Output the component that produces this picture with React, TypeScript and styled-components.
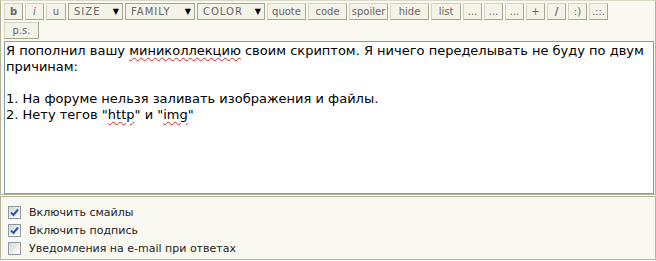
import React from 'react';
import styled, { createGlobalStyle } from 'styled-components';

const GlobalStyle = createGlobalStyle`
  html, body {
    margin: 0;
    padding: 0;
    background: #ffffff;
  }
  body {
    font-family: 'DejaVu Sans', Verdana, sans-serif;
  }
`;

type ToolButton = { label: string; width: number; bold?: boolean };

const buttons: ToolButton[] = [
  { label: 'quote', width: 39 },
  { label: 'code', width: 39 },
  { label: 'spoiler', width: 39 },
  { label: 'hide', width: 39 },
  { label: 'list', width: 30 },
  { label: '...', width: 19 },
  { label: '...', width: 19 },
  { label: '...', width: 19 },
  { label: '+', width: 19 },
  { label: '/', width: 19, bold: true },
  { label: ':)', width: 19 },
  { label: '.::.', width: 19 },
];

const options = [
  { label: 'Включить смайлы', checked: true },
  { label: 'Включить подпись', checked: true },
  { label: 'Уведомления на e-mail при ответах', checked: false },
];

const CheckBox = ({ checked }: { checked: boolean }) => (
  <Box>
    {checked && (
      <svg width="9" height="9" viewBox="0 0 9 9">
        <path d="M1 4.5 L3.5 7 L8 1.5" fill="none" stroke="#2a56b0" strokeWidth="2" />
      </svg>
    )}
  </Box>
);

const App = () => {
  return (
    <Page>
      <GlobalStyle />
      <EditorPanel>
        <Toolbar>
          <Btn w={19} weight="bold">b</Btn>
          <Btn w={19} italic>i</Btn>
          <Btn w={20}>u</Btn>
          <Select w={55}>SIZE<Arrow>▼</Arrow></Select>
          <Select w={70}>FAMILY<Arrow>▼</Arrow></Select>
          <Select w={68}>COLOR<Arrow>▼</Arrow></Select>
          {buttons.map((b, i) => (
            <Btn key={i} w={b.width} weight={b.bold ? 'bold' : 'normal'}>
              {b.label}
            </Btn>
          ))}
        </Toolbar>
        <Toolbar>
          <Btn w={35}>p.s.</Btn>
        </Toolbar>
        <TextArea>
          <Line>
            Я пополнил вашу <Misspelled>миниколлекцию</Misspelled> своим скриптом. Я ничего переделывать не буду по двум причинам:
          </Line>
          <Line>&nbsp;</Line>
          <Line>1. На форуме нельзя заливать изображения и файлы.</Line>
          <Line>
            2. Нету тегов "<Misspelled>http</Misspelled>" и "<Misspelled>img</Misspelled>"
          </Line>
        </TextArea>
      </EditorPanel>
      <OptionsPanel>
        {options.map((o) => (
          <OptionRow key={o.label}>
            <CheckBox checked={o.checked} />
            <OptionLabel>{o.label}</OptionLabel>
          </OptionRow>
        ))}
      </OptionsPanel>
    </Page>
  );
};

export default App;

const Page = styled.div`
  width: 656px;
  height: 261px;
  background: #ffffff;
`;

const EditorPanel = styled.div`
  box-sizing: border-box;
  width: 656px;
  height: 195px;
  background: #f9f9f1;
  border: 1px solid #b4b49b;
  border-top-color: #d9d9c8;
  padding: 2px 1px 0 3px;
`;

const Toolbar = styled.div`
  display: flex;
  gap: 2px;
  height: 17px;
  margin-bottom: 2px;
`;

const Btn = styled.div<{ w: number; weight?: string; italic?: boolean }>`
  box-sizing: border-box;
  width: ${({ w }) => w}px;
  height: 17px;
  display: flex;
  align-items: center;
  justify-content: center;
  border: 1px solid #a7a78e;
  border-top-color: #d2d2c0;
  border-left-color: #d2d2c0;
  background: #f3f3e8;
  color: #666;
  font-size: 10px;
  font-weight: ${({ weight }) => weight || 'normal'};
  font-style: ${({ italic }) => (italic ? 'italic' : 'normal')};
  white-space: nowrap;
  overflow: hidden;
`;

const Select = styled.div<{ w: number }>`
  box-sizing: border-box;
  width: ${({ w }) => w}px;
  height: 17px;
  display: flex;
  align-items: center;
  justify-content: space-between;
  padding: 0 3px 0 5px;
  border: 1px solid #a7a78e;
  background: #f3f3e8;
  color: #666;
  font-size: 10px;
  letter-spacing: 1px;
`;

const Arrow = styled.span`
  color: #000;
  font-size: 8px;
  letter-spacing: 0;
`;

const TextArea = styled.div`
  box-sizing: border-box;
  width: 650px;
  height: 153px;
  border: 1px solid #7f9db9;
  background: #ffffff;
  padding: 1px 0 0 1px;
  color: #000;
  font-size: 13px;
  overflow: hidden;
`;

const Line = styled.div`
  line-height: 16px;
`;

const Misspelled = styled.span`
  text-decoration: underline wavy #e02020;
  text-decoration-thickness: 1px;
  text-underline-offset: 2px;
`;

const OptionsPanel = styled.div`
  box-sizing: border-box;
  width: 656px;
  height: 64px;
  margin-top: 1px;
  background: #f9f9f1;
  border: 1px solid #b4b49b;
  padding: 9px 0 0 7px;
  display: flex;
  flex-direction: column;
  gap: 5px;
`;

const OptionRow = styled.div`
  display: flex;
  align-items: center;
  height: 13px;
`;

const Box = styled.div`
  box-sizing: border-box;
  width: 13px;
  height: 13px;
  border: 1px solid #8f9aa5;
  background: linear-gradient(135deg, #d8d8d2 0%, #f4f4f0 70%, #ffffff 100%);
  display: flex;
  align-items: center;
  justify-content: center;
`;

const OptionLabel = styled.span`
  margin-left: 8px;
  color: #222;
  font-size: 11px;
`;
